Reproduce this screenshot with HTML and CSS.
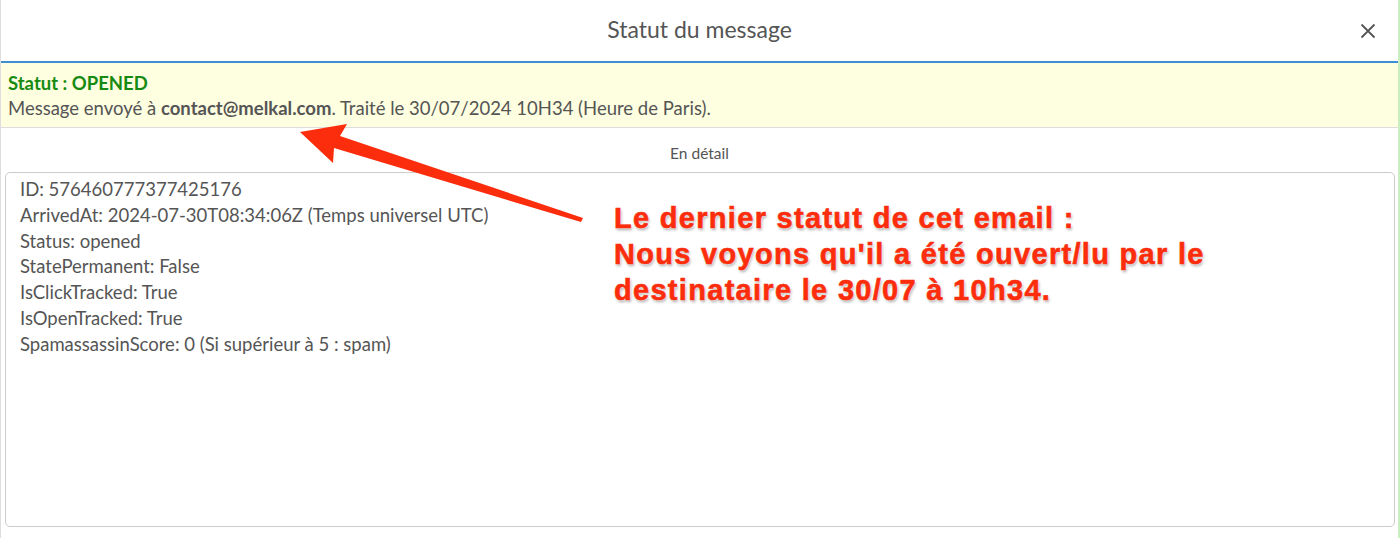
FILE: index.html
```html
<!DOCTYPE html>
<html lang="fr">
<head>
  <meta charset="UTF-8">
  <meta name="viewport" content="width=device-width, initial-scale=1.0">
  <title>Statut du message</title>
  <link rel="stylesheet" href="styles.css">
</head>
<body>
  <div class="modal">
    <div class="modal-header">
      <span></span>
      <h1 class="modal-title">Statut du message</h1>
      <button class="close" type="button" aria-label="Fermer">
        <svg width="16" height="16" viewBox="0 0 16 16"><path d="M1.5 1.5 L14.5 14.5 M14.5 1.5 L1.5 14.5" stroke="#555" stroke-width="1.8" fill="none"/></svg>
      </button>
    </div>

    <div class="status">
      <div class="status-title">Statut : OPENED</div>
      <div>Message envoyé à <b>contact@melkal.com</b>. Traité le 30/07/2024 10H34 (Heure de Paris).</div>
    </div>

    <div class="detail-label">En détail</div>
    <div class="detail-box">
      <div>ID: 576460777377425176</div>
      <div>ArrivedAt: 2024-07-30T08:34:06Z (Temps universel UTC)</div>
      <div>Status: opened</div>
      <div>StatePermanent: False</div>
      <div>IsClickTracked: True</div>
      <div>IsOpenTracked: True</div>
      <div>SpamassassinScore: 0 (Si supérieur à 5 : spam)</div>
    </div>
  </div>

  <!-- annotation -->
  <svg class="arrow" width="600" height="240" viewBox="0 0 600 240">
    <path d="M300 132 L347 124 L340 136 L583 218 L581 222 L334 148 L333 163 Z" fill="#fb2d0c"/>
  </svg>
  <div class="note">
    Le dernier statut de cet email :<br>
    Nous voyons qu'il a été ouvert/lu par le<br>
    destinataire le 30/07 à 10h34.
  </div>
</body>
</html>
```

FILE: styles.css
```css
body { margin: 0; font-family: Lato, "Open Sans", sans-serif; color: #555; background: #fff; }
.modal { height: 538px; border-left: 1px solid #ddd; border-right: 2px solid #c9efc1; box-sizing: border-box; display: flex; flex-direction: column; }
.modal-header { height: 61px; display: grid; grid-template-columns: 1fr auto 1fr; align-items: center; border-bottom: 2px solid #3d8fd1; }
.modal-title { margin: 0 0 4px; font-size: 23px; font-weight: normal; color: #555; }
.close { justify-self: end; margin-right: 18px; background: none; border: 0; padding: 4px; line-height: 0; cursor: pointer; }
.status { background: #fefee0; border-bottom: 1px solid #ddd; padding: 8px 7px 6px; height: 50px; font-size: 18.5px; line-height: 25px; }
.status-title { color: #178a12; font-weight: bold; }
.detail-label { text-align: center; font-size: 15.5px; padding: 15px 0 9px; line-height: 20px; }
.detail-box { flex: 1; margin: 0 3px 11px 4px; border: 1px solid #ccc; border-radius: 5px; padding: 4px 14px; font-size: 18.5px; line-height: 25.8px; }
.arrow { position: absolute; left: 0; top: 0; }
.note { position: absolute; left: 614px; top: 200px; font-family: "Liberation Sans", Arial, sans-serif; font-weight: bold; font-size: 29px; line-height: 36px; letter-spacing: 1.3px; color: #fb2d0c; -webkit-text-stroke: 0.6px #fb2d0c; text-shadow: 0 0 2px #fff, 0 0 2px #fff, 1px 2px 3px rgba(0,0,0,0.35); }
```
